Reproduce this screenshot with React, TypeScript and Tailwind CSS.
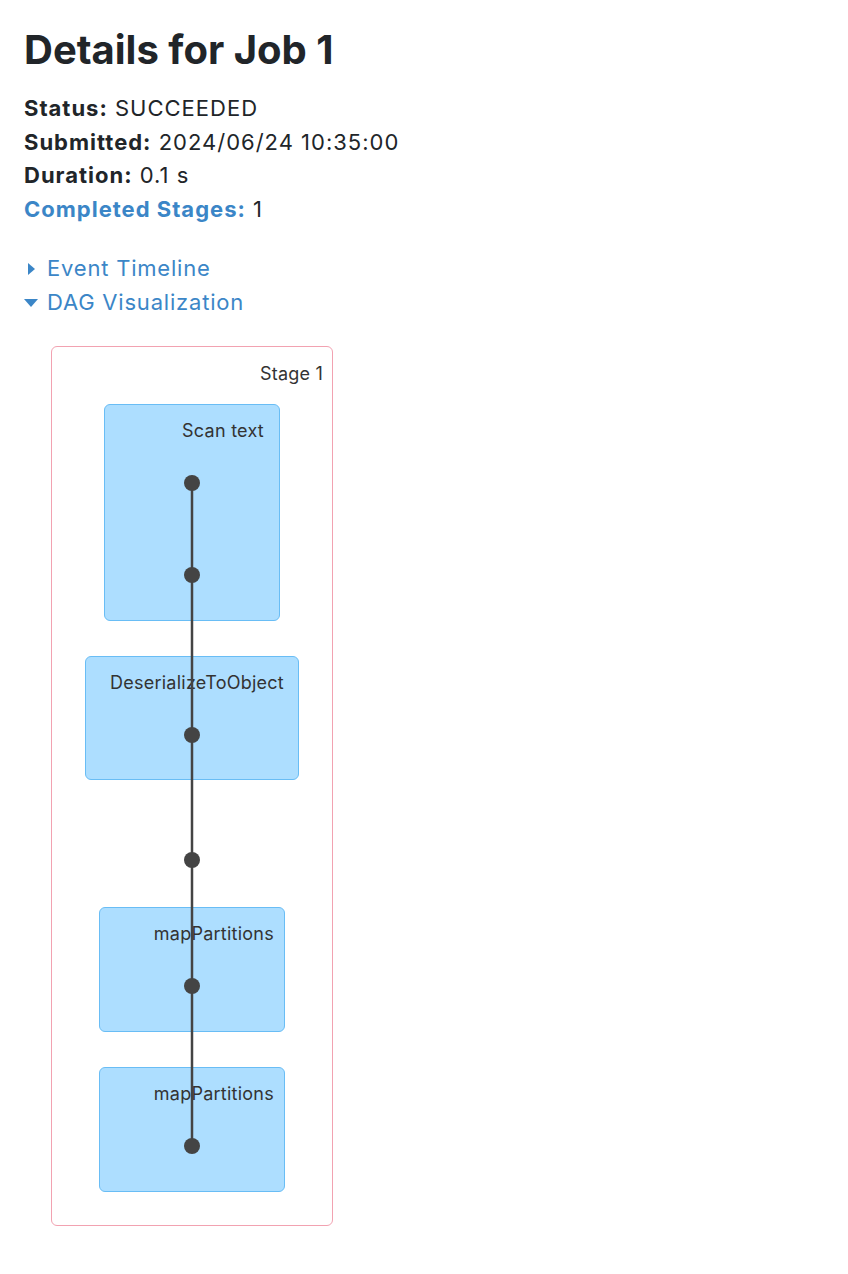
import React from "react";

type DagNode = {
  label: string;
  left: number;
  top: number;
  width: number;
  height: number;
  padRight: number;
};

const nodes: DagNode[] = [
  { label: "Scan text", left: 52, top: 57, width: 176, height: 217, padRight: 15 },
  { label: "DeserializeToObject", left: 33, top: 309, width: 214, height: 124, padRight: 14 },
  { label: "mapPartitions", left: 47, top: 560, width: 186, height: 125, padRight: 10 },
  { label: "mapPartitions", left: 47, top: 720, width: 186, height: 125, padRight: 10 },
];

const dots = [136, 228, 388, 513, 639, 799];

function Summary() {
  return (
    <ul className="text-[22px] leading-[33.6px] tracking-[1px] text-[#212529]">
      <li>
        <strong className="font-bold">Status:</strong> SUCCEEDED
      </li>
      <li>
        <strong className="font-bold">Submitted:</strong> 2024/06/24 10:35:00
      </li>
      <li>
        <strong className="font-bold">Duration:</strong> 0.1 s
      </li>
      <li>
        <a className="font-bold text-[#3b86c7]">Completed Stages:</a> 1
      </li>
    </ul>
  );
}

function Toggles() {
  return (
    <div className="mt-[26px] text-[22px] leading-[33.6px] tracking-[0.8px] text-[#3b86c7]">
      <div className="flex items-center">
        <span className="w-[23px] flex justify-start pl-[4px]">
          <span className="block w-0 h-0 border-y-[6px] border-y-transparent border-l-[7px] border-l-[#3b86c7]" />
        </span>
        Event Timeline
      </div>
      <div className="flex items-center">
        <span className="w-[23px] flex justify-start">
          <span className="block w-0 h-0 border-x-[7px] border-x-transparent border-t-[8px] border-t-[#3b86c7]" />
        </span>
        DAG Visualization
      </div>
    </div>
  );
}

function StageGraph() {
  return (
    <div className="relative ml-[27px] mt-[26px] w-[282px] h-[880px] rounded-[6px] border-[1.5px] border-[#f2a2b1] bg-white">
      <span className="absolute right-[9px] top-[15px] text-[18px] leading-[24px] tracking-[0.2px] text-[#333]">
        Stage 1
      </span>
      {nodes.map((n, i) => (
        <div
          key={i}
          className="absolute rounded-[6px] border-[1.5px] border-[#69bdf5] bg-[#addeff]"
          style={{ left: n.left, top: n.top, width: n.width, height: n.height }}
        >
          <div
            className="absolute top-[14px] text-[18px] leading-[24px] tracking-[0.25px] text-[#333] whitespace-nowrap"
            style={{ right: n.padRight }}
          >
            {n.label}
          </div>
        </div>
      ))}
      <svg className="absolute left-0 top-0" width="282" height="880">
        <line x1="140" y1="136" x2="140" y2="799" stroke="#444" strokeWidth="2.5" />
        {dots.map((y) => (
          <circle key={y} cx="140" cy={y} r="8" fill="#444" />
        ))}
      </svg>
    </div>
  );
}

export default function App() {
  return (
    <div className="min-h-[1274px] bg-white px-[24px] pt-[26px] font-['Inter','Liberation_Sans',sans-serif]">
      <h3 className="text-[40px] leading-[48px] font-bold text-[#212529]">
        Details for Job 1
      </h3>
      <div className="mt-[18px]">
        <Summary />
      </div>
      <Toggles />
      <StageGraph />
    </div>
  );
}
